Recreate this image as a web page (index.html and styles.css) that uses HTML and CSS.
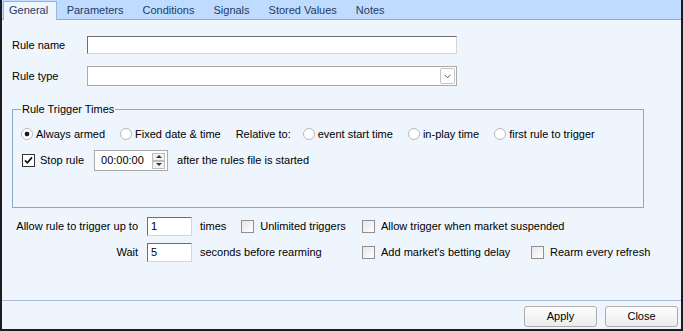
FILE: index.html
```html
<!DOCTYPE html>
<html lang="en">
<head>
    <meta charset="UTF-8">
    <title>Rule Editor</title>
    <link rel="stylesheet" href="styles.css">
</head>
<body>
    <div class="window">
        <div class="tabs">
            <div class="tab active">General</div>
            <div class="tab">Parameters</div>
            <div class="tab">Conditions</div>
            <div class="tab">Signals</div>
            <div class="tab">Stored Values</div>
            <div class="tab">Notes</div>
        </div>

        <div class="panel">
            <div class="field-row">
                <span class="field-label">Rule name</span>
                <div class="textbox wide"></div>
            </div>
            <div class="field-row">
                <span class="field-label">Rule type</span>
                <div class="combo">
                    <span class="combo-btn">
                        <svg width="7" height="5" viewBox="0 0 7 5"><polyline points="0.5,0.8 3.5,3.8 6.5,0.8" fill="none" stroke="#555" stroke-width="1"/></svg>
                    </span>
                </div>
            </div>

            <fieldset class="group">
                <legend>Rule Trigger Times</legend>
                <div class="option-row radios">
                    <span class="opt"><span class="radio on"></span>Always armed</span>
                    <span class="opt"><span class="radio"></span>Fixed date &amp; time</span>
                    <span class="opt relative">Relative to:</span>
                    <span class="opt"><span class="radio"></span>event start time</span>
                    <span class="opt"><span class="radio"></span>in-play time</span>
                    <span class="opt"><span class="radio"></span>first rule to trigger</span>
                </div>
                <div class="option-row stop-row">
                    <span class="opt stop"><span class="check on">
                        <svg width="9" height="9" viewBox="0 0 9 9"><path d="M1 4.3 L3.4 6.8 L8 1.4" fill="none" stroke="#111" stroke-width="1.7"/></svg>
                    </span>Stop rule</span>
                    <div class="spin">
                        <span>00:00:00</span>
                        <span class="spin-btns"><span class="spin-up"></span><span class="spin-down"></span></span>
                    </div>
                    <span>after the rules file is started</span>
                </div>
            </fieldset>

            <div class="trigger-grid">
                <span class="grid-label">Allow rule to trigger up to</span>
                <div class="textbox small">1</div>
                <div class="cell">
                    <span class="times">times</span>
                    <span class="opt"><span class="check"></span>Unlimited triggers</span>
                </div>
                <span class="opt span2"><span class="check"></span>Allow trigger when market suspended</span>

                <span class="grid-label">Wait</span>
                <div class="textbox small">5</div>
                <span class="cell">seconds before rearming</span>
                <span class="opt"><span class="check"></span>Add market's betting delay</span>
                <span class="opt"><span class="check"></span>Rearm every refresh</span>
            </div>
        </div>

        <div class="footer">
            <button class="btn">Apply</button>
            <button class="btn">Close</button>
        </div>
    </div>
</body>
</html>
```

FILE: styles.css
```css
body {
    margin: 0;
    font-family: "Liberation Sans", Arial, sans-serif;
    font-size: 11px;
    line-height: 13px;
    color: #000;
}
.window {
    width: 683px;
    height: 331px;
    box-sizing: border-box;
    border: 2px solid #1c1c1c;
    border-top: 0;
    background-color: #eef5fd;
    display: flex;
    flex-direction: column;
}
.tabs {
    display: flex;
    align-items: flex-end;
    height: 19px;
    background-color: #bfdbff;
    border-bottom: 1px solid #8da9cf;
}
.tab {
    height: 17px;
    line-height: 17px;
    padding: 0 9.5px;
    color: #1f3a5f;
}
.tab.active {
    height: 18px;
    margin-left: 1px;
    margin-bottom: -1px;
    padding: 0 8px 0 5px;
    background-color: #eef5fd;
    border: 1px solid #9bb5d6;
    border-bottom: 0;
}
.panel {
    flex: 1;
    padding: 0 10px;
}
.field-row {
    display: flex;
    align-items: center;
    margin-top: 16px;
}
.field-row + .field-row {
    margin-top: 12px;
}
.field-label {
    width: 75px;
}
.textbox {
    box-sizing: border-box;
    background-color: #fff;
    border: 1px solid;
    border-color: #6e6e6e #d6d6d6 #d6d6d6 #6e6e6e;
}
.textbox.wide {
    width: 370px;
    height: 18px;
}
.textbox.small {
    height: 19px;
    padding-left: 3px;
    line-height: 17px;
}
.combo {
    box-sizing: border-box;
    width: 370px;
    height: 20px;
    background-color: #fff;
    border: 1px solid #ababab;
    display: flex;
    justify-content: flex-end;
    align-items: center;
    padding-right: 1px;
}
.combo-btn {
    box-sizing: border-box;
    width: 15px;
    height: 16px;
    border: 1px solid #c5c5c5;
    border-radius: 2px;
    display: flex;
    align-items: center;
    justify-content: center;
}
.group {
    box-sizing: border-box;
    width: 632px;
    min-width: 0;
    margin: 17px 0 0;
    padding: 10px 8px 36px;
    border: 1px solid #89aacf;
}
.group legend {
    padding: 0 1px;
    line-height: 13px;
}
.option-row {
    display: flex;
    align-items: center;
    height: 16px;
}
.option-row.stop-row {
    height: 21px;
    margin-top: 8px;
}
.opt {
    display: flex;
    align-items: center;
    margin-right: 13px;
}
.radios .opt {
    margin-right: 15px;
}
.radios .opt.relative {
    margin-right: 12px;
}
.opt.stop {
    margin-left: 1px;
    margin-right: 10px;
}
.radio {
    box-sizing: border-box;
    width: 12px;
    height: 12px;
    margin-right: 3px;
    border-radius: 50%;
    border: 1px solid #b9b9b9;
    background: #fff;
}
.radio.on {
    background: radial-gradient(circle, #1a1a1a 0 2px, #fff 2.7px);
}
.check {
    box-sizing: border-box;
    width: 13px;
    height: 13px;
    margin-right: 6px;
    border: 1px solid #8f8f8f;
    background: linear-gradient(135deg, #e6e6e6, #fff);
    display: flex;
    align-items: center;
    justify-content: center;
}
.check.on {
    border-color: #333;
    background: #fff;
    margin-right: 5px;
}
.spin {
    box-sizing: border-box;
    width: 74px;
    height: 21px;
    margin-right: 9px;
    padding: 0 2px 0 6px;
    background-color: #fff;
    border: 1px solid #a9a9a9;
    display: flex;
    align-items: center;
    justify-content: space-between;
}
.spin-btns {
    display: flex;
    flex-direction: column;
}
.spin-btns span {
    box-sizing: border-box;
    width: 13px;
    height: 8px;
    border: 1px solid #bcbcbc;
    background-color: #f3f3f3;
    display: flex;
    align-items: center;
    justify-content: center;
}
.spin-up::after,
.spin-down::after {
    content: "";
    border-left: 3px solid transparent;
    border-right: 3px solid transparent;
}
.spin-up::after {
    border-bottom: 3px solid #333;
}
.spin-down::after {
    border-top: 3px solid #333;
}
.trigger-grid {
    display: grid;
    grid-template-columns: 135px 45px 170px 169px auto;
    grid-template-rows: 19px 19px;
    row-gap: 7px;
    align-items: center;
    margin-top: 9px;
}
.grid-label {
    text-align: right;
    padding-right: 9px;
}
.cell {
    display: flex;
    align-items: center;
    padding-left: 8px;
}
.times {
    margin-right: 15px;
}
.span2 {
    grid-column: span 2;
}
.footer {
    display: flex;
    justify-content: flex-end;
    gap: 8px;
    padding: 5px 3px 2px;
    border-top: 1px solid #a7b9d6;
}
.btn {
    width: 73px;
    height: 21px;
    font: inherit;
    color: #000;
    background: linear-gradient(#fdfdfd, #ececec);
    border: 1px solid #adadad;
    border-radius: 3px;
}
```
